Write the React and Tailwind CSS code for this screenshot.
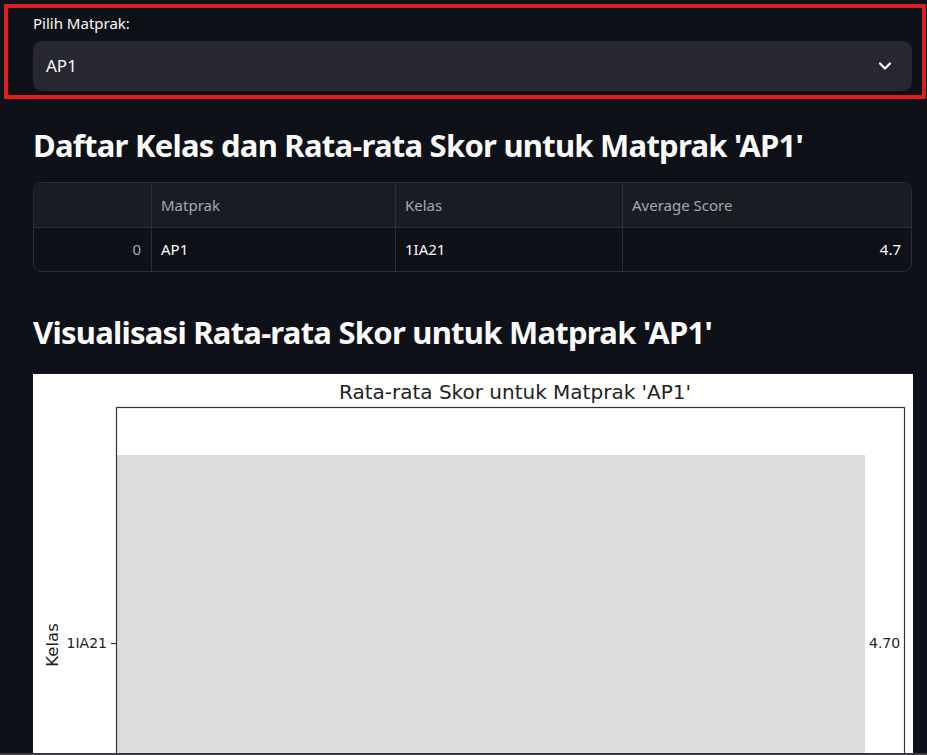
import React from 'react';
import { ChevronDown } from 'lucide-react';

const rows = [{ idx: 0, matprak: 'AP1', kelas: '1IA21', score: '4.7' }];

function ScoreChart() {
  return (
    <div className="ml-[33px] w-[880px] mt-[20px] bg-white h-[381px] overflow-hidden">
      <svg width="880" height="381" viewBox="0 0 880 381" style={{ fontFamily: '"DejaVu Sans", sans-serif' }}>
        <text x="482" y="25" textAnchor="middle" fontSize="20" fill="#222">
          Rata-rata Skor untuk Matprak 'AP1'
        </text>
        <rect x="84" y="81" width="748" height="320" fill="#dcdcdc" />
        <rect x="83.5" y="33.5" width="788" height="360" fill="none" stroke="#333" strokeWidth="1.2" />
        <line x1="78" y1="269.5" x2="83" y2="269.5" stroke="#333" strokeWidth="1.2" />
        <text x="74" y="274" textAnchor="end" fontSize="14" fill="#222">1IA21</text>
        <text x="836" y="274" fontSize="14" fill="#222">4.70</text>
        <text transform="translate(25 271) rotate(-90)" textAnchor="middle" fontSize="16.5" fill="#222">
          Kelas
        </text>
      </svg>
    </div>
  );
}

export default function App() {
  return (
    <div
      className="h-[755px] w-full overflow-hidden bg-[#0e1117] text-[#fafafa] pt-[4px] border-b-[2px] border-[#3a3b3e]"
      style={{ fontFamily: '"Noto Sans", sans-serif' }}
    >
      {/* highlighted select block */}
      <div className="ml-[4px] w-[922px] border-[4px] border-[#e21c1c] pl-[25px] pr-[10px] pt-[3px] pb-[4px]">
        <div className="text-[15px] leading-[24px] mb-[6px]">Pilih Matprak:</div>
        <div className="h-[50px] rounded-[9px] bg-[#262730] flex items-center justify-between pl-[13px] pr-[17px]">
          <span className="text-[17px]">AP1</span>
          <ChevronDown size={20} strokeWidth={2.6} className="text-white" />
        </div>
      </div>

      <h1 className="ml-[33px] mr-[15px] mt-[24px] text-[31px] leading-[44px] font-bold tracking-[-0.75px]">
        Daftar Kelas dan Rata-rata Skor untuk Matprak 'AP1'
      </h1>

      <div className="ml-[33px] mr-[15px] mt-[15px] rounded-[8px] border border-[#2b2e36] overflow-hidden text-[15px]">
        <div className="grid grid-cols-[118px_244px_227px_1fr] h-[45px] bg-[#1a1c23] border-b border-[#2b2e36] text-[#a3a8b4]">
          <div className="border-r border-[#2b2e36]" />
          <div className="border-r border-[#2b2e36] flex items-center px-[9px]">Matprak</div>
          <div className="border-r border-[#2b2e36] flex items-center px-[9px]">Kelas</div>
          <div className="flex items-center px-[9px]">Average Score</div>
        </div>
        {rows.map((r) => (
          <div key={r.idx} className="grid grid-cols-[118px_244px_227px_1fr] h-[43px]">
            <div className="border-r border-[#2b2e36] flex items-center justify-end px-[10px] text-[#a3a8b4]">{r.idx}</div>
            <div className="border-r border-[#2b2e36] flex items-center px-[9px]">{r.matprak}</div>
            <div className="border-r border-[#2b2e36] flex items-center px-[9px]">{r.kelas}</div>
            <div className="flex items-center justify-end px-[10px]">{r.score}</div>
          </div>
        ))}
      </div>

      <h2 className="ml-[33px] mr-[15px] mt-[38px] text-[31px] leading-[44px] font-bold tracking-[-0.75px]">
        Visualisasi Rata-rata Skor untuk Matprak 'AP1'
      </h2>

      <ScoreChart />
    </div>
  );
}
